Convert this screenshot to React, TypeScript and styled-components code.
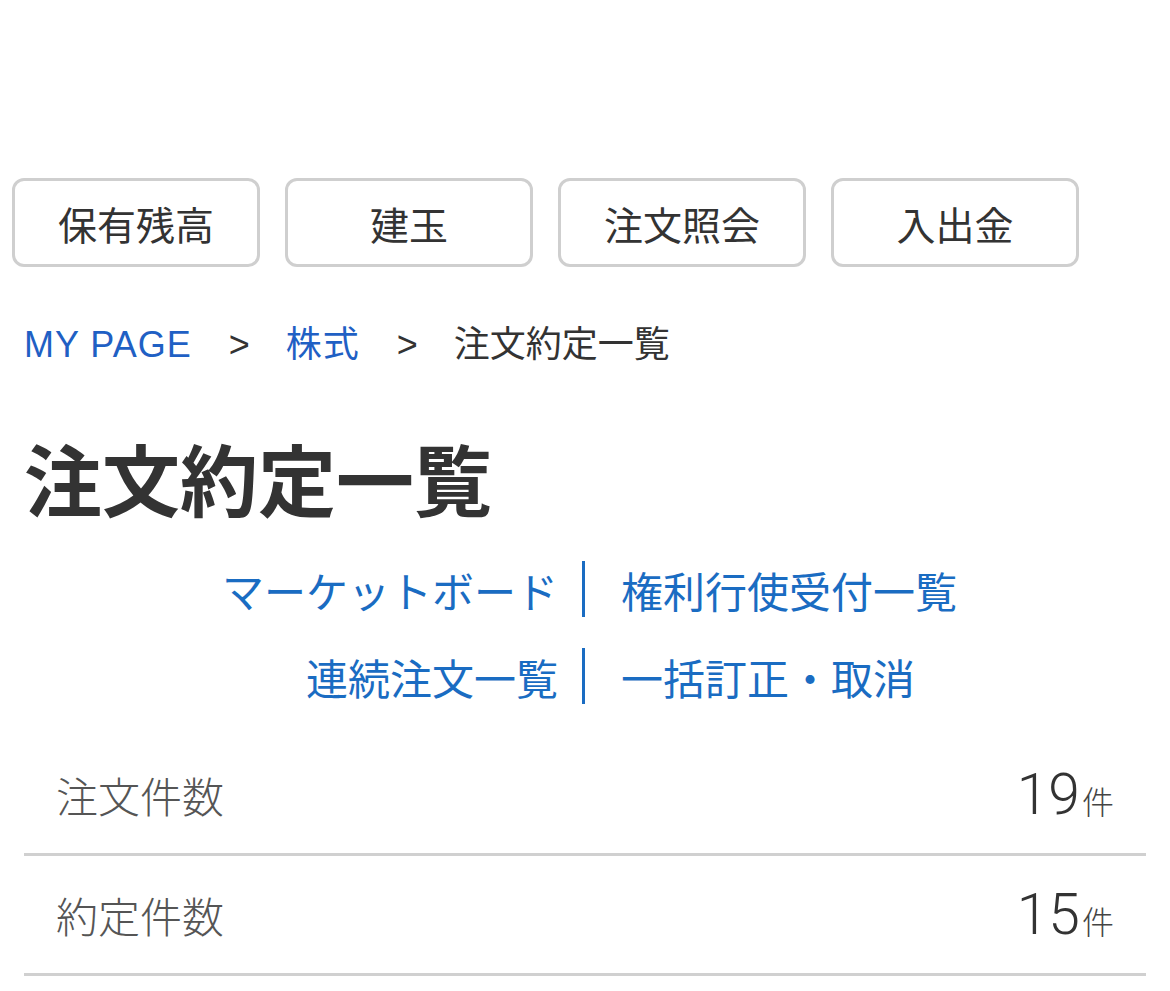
import React from "react";
import styled, {createGlobalStyle} from "styled-components";

const GlobalStyle = createGlobalStyle`
  html, body {
    margin: 0;
    padding: 0;
    background: #fff;
  }
  body {
    font-family: "Noto Sans CJK JP", "Liberation Sans", sans-serif;
    color: #333;
  }
`;

const tabs = ["保有残高", "建玉", "注文照会", "入出金"];

const links = [
  ["マーケットボード", "権利行使受付一覧"],
  ["連続注文一覧", "一括訂正・取消"],
];

const counts = [
  {label: "注文件数", value: 19},
  {label: "約定件数", value: 15},
];

const App = () => {
  return (
    <Page>
      <GlobalStyle />
      <TabBar>
        {tabs.map((t) => (
          <TabButton key={t}>{t}</TabButton>
        ))}
      </TabBar>

      <Breadcrumb>
        <Crumb href="#">MY PAGE</Crumb>
        <CrumbSep>&gt;</CrumbSep>
        <Crumb href="#">株式</Crumb>
        <CrumbSep>&gt;</CrumbSep>
        <CrumbCurrent>注文約定一覧</CrumbCurrent>
      </Breadcrumb>

      <Title>注文約定一覧</Title>

      <LinkGrid>
        {links.map(([left, right]) => (
          <React.Fragment key={left}>
            <SubLink href="#" $side="left">{left}</SubLink>
            <Divider />
            <SubLink href="#" $side="right">{right}</SubLink>
          </React.Fragment>
        ))}
      </LinkGrid>

      <CountList>
        {counts.map((c) => (
          <CountRow key={c.label}>
            <CountLabel>{c.label}</CountLabel>
            <CountValue>
              <Num>{c.value}</Num>
              <Unit>件</Unit>
            </CountValue>
          </CountRow>
        ))}
      </CountList>
    </Page>
  );
};

const Page = styled.main`
  width: 1170px;
  padding-top: 178px;
  box-sizing: border-box;
`;

const TabBar = styled.nav`
  display: flex;
  gap: 25px;
  padding-left: 12px;
`;

const TabButton = styled.button`
  width: 248px;
  height: 89px;
  box-sizing: border-box;
  border: 3px solid #cfcfcf;
  border-radius: 12px;
  background: #fff;
  color: #333;
  font-family: "Noto Sans CJK JP", sans-serif;
  font-size: 39px;
  padding: 0;
  display: flex;
  align-items: center;
  justify-content: center;
`;

const Breadcrumb = styled.div`
  display: flex;
  align-items: baseline;
  margin-top: 56px;
  padding-left: 24px;
  font-family: "Liberation Sans", "Noto Sans CJK JP", sans-serif;
  font-size: 36px;
  line-height: 44px;
`;

const Crumb = styled.a`
  color: #1f60c4;
  text-decoration: none;
  letter-spacing: 1px;
`;

const CrumbSep = styled.span`
  color: #333;
  margin: 0 36px 0 37px;
`;

const CrumbCurrent = styled.span`
  color: #333;
`;

const Title = styled.h1`
  margin: 63px 0 0;
  padding-left: 24px;
  font-family: "Noto Sans CJK JP", sans-serif;
  font-size: 78px;
  font-weight: 700;
  line-height: 94px;
  color: #333;
`;

const LinkGrid = styled.div`
  display: grid;
  grid-template-columns: 1fr 3px 1fr;
  grid-auto-rows: 56px;
  row-gap: 31px;
  margin: 37px 27px 0 24px;
`;

const SubLink = styled.a<{$side: "left" | "right"}>`
  display: flex;
  align-items: center;
  justify-content: ${(p) => (p.$side === "left" ? "flex-end" : "flex-start")};
  padding: ${(p) => (p.$side === "left" ? "0 24px 0 0" : "0 0 0 36px")};
  color: #1a6cc2;
  text-decoration: none;
  font-family: "Noto Sans CJK JP", sans-serif;
  font-size: 42px;
  white-space: nowrap;
`;

const Divider = styled.span`
  background: #1a6cc2;
`;

const CountList = styled.div`
  margin: 32px 24px 0;
`;

const CountRow = styled.div`
  display: flex;
  align-items: center;
  justify-content: space-between;
  height: 120px;
  box-sizing: border-box;
  padding: 0 32px;
  border-bottom: 3px solid #d0d0d0;
`;

const CountLabel = styled.span`
  font-family: "Noto Sans CJK JP", sans-serif;
  font-size: 42px;
  font-weight: 300;
  color: #555;
`;

const CountValue = styled.span`
  display: flex;
  align-items: baseline;
`;

const Num = styled.span`
  font-family: Roboto, "Liberation Sans", sans-serif;
  font-size: 57px;
  font-weight: 300;
  color: #333;
`;

const Unit = styled.span`
  font-family: "Noto Sans CJK JP", sans-serif;
  font-size: 32px;
  font-weight: 300;
  color: #444;
  margin-left: 2px;
`;

export default App;
